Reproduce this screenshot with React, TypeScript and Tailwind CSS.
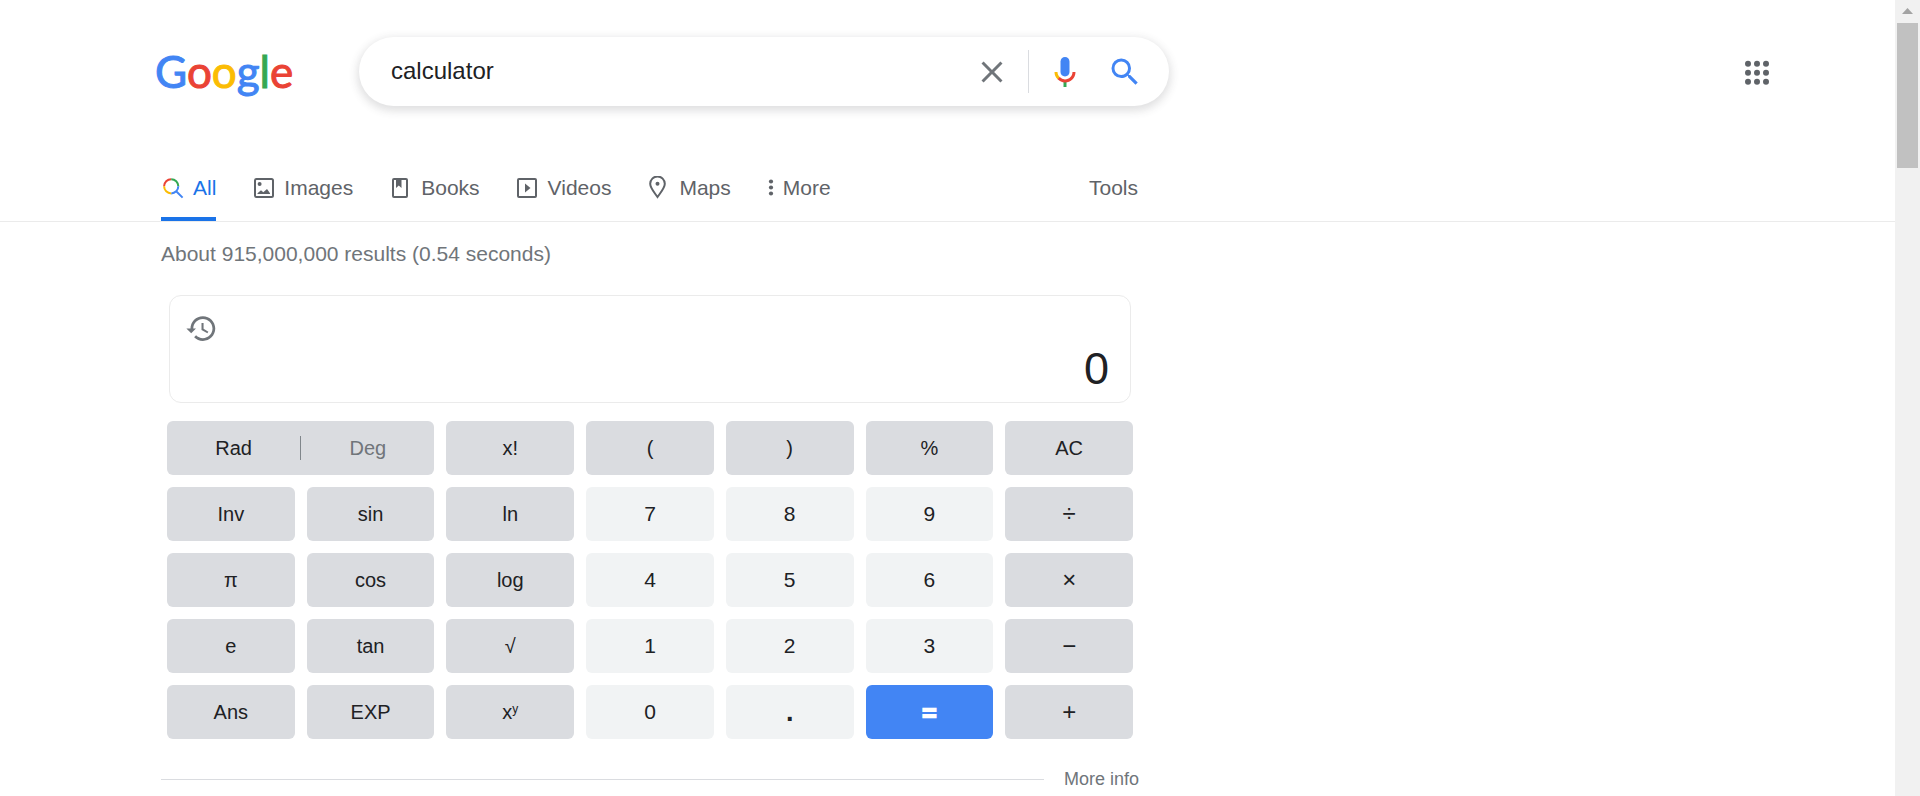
import React from 'react';

interface Key {
  label: React.ReactNode;
  kind: 'function' | 'digit' | 'operator' | 'point' | 'equals';
}

const keyStyles = {
  function: 'bg-[#dadce0] text-[#202124] text-xl',
  digit: 'bg-[#f1f3f4] text-[#202124] text-[21px]',
  operator: 'bg-[#dadce0] text-[#202124] text-2xl',
  point: 'bg-[#f1f3f4] text-[#202124] text-[27px] font-bold',
  equals: "bg-[#4285f4] text-white text-[27px] font-black font-['Inter',sans-serif]",
};

const keys: Key[] = [
  { label: 'x!', kind: 'function' },
  { label: '(', kind: 'function' },
  { label: ')', kind: 'function' },
  { label: '%', kind: 'function' },
  { label: 'AC', kind: 'function' },
  { label: 'Inv', kind: 'function' },
  { label: 'sin', kind: 'function' },
  { label: 'ln', kind: 'function' },
  { label: '7', kind: 'digit' },
  { label: '8', kind: 'digit' },
  { label: '9', kind: 'digit' },
  { label: '÷', kind: 'operator' },
  { label: 'π', kind: 'function' },
  { label: 'cos', kind: 'function' },
  { label: 'log', kind: 'function' },
  { label: '4', kind: 'digit' },
  { label: '5', kind: 'digit' },
  { label: '6', kind: 'digit' },
  { label: '×', kind: 'operator' },
  { label: 'e', kind: 'function' },
  { label: 'tan', kind: 'function' },
  { label: '√', kind: 'function' },
  { label: '1', kind: 'digit' },
  { label: '2', kind: 'digit' },
  { label: '3', kind: 'digit' },
  { label: '−', kind: 'operator' },
  { label: 'Ans', kind: 'function' },
  { label: 'EXP', kind: 'function' },
  { label: <span>x<sup className="text-xs">y</sup></span>, kind: 'function' },
  { label: '0', kind: 'digit' },
  { label: '.', kind: 'point' },
  { label: '=', kind: 'equals' },
  { label: '+', kind: 'operator' },
];

const AllIcon = () => (
  <svg className="w-6 h-6" viewBox="0 0 24 24" fill="none" strokeWidth="2">
    <path d="M3.1 10.3A7.1 7.1 0 0 1 10.2 3.2" stroke="#ea4335" />
    <path d="M10.2 3.2A7.1 7.1 0 0 1 17.3 10.3" stroke="#34a853" />
    <path d="M17.3 10.3A7.1 7.1 0 0 1 10.2 17.4M15.2 15.3L21.6 21.6" stroke="#4285f4" />
    <path d="M10.2 17.4A7.1 7.1 0 0 1 3.1 10.3" stroke="#fbbc04" />
  </svg>
);

const ImagesIcon = () => (
  <svg className="w-6 h-6" viewBox="0 0 24 24" fill="currentColor">
    <rect x="3" y="3" width="18" height="18" rx="1.5" fill="none" stroke="currentColor" strokeWidth="2" />
    <circle cx="7.6" cy="8" r="2" />
    <path d="M5.5 18v-.8L9 14.2l2.3 2L15 13l3 4.2v.8z" />
  </svg>
);

const BooksIcon = () => (
  <svg className="w-6 h-6" viewBox="0 0 24 24" fill="currentColor">
    <rect x="4" y="3" width="14" height="18" rx="1" fill="none" stroke="currentColor" strokeWidth="2" />
    <path d="M7 3h5.5v9l-2.75-2.4L7 12z" />
  </svg>
);

const VideosIcon = () => (
  <svg className="w-6 h-6" viewBox="0 0 24 24" fill="currentColor">
    <rect x="2" y="3" width="18" height="18" rx="1" fill="none" stroke="currentColor" strokeWidth="2" />
    <path d="M9 7.5v9l5.5-4.5z" />
  </svg>
);

const MapsIcon = () => (
  <svg className="w-6 h-6" viewBox="0 0 24 24" fill="currentColor">
    <path
      d="M10.5 21C7 16 3.2 12 3.2 7.8a7.3 7.3 0 0 1 14.6 0C17.8 12 14 16 10.5 21z"
      fill="none"
      stroke="currentColor"
      strokeWidth="2"
    />
    <circle cx="10.5" cy="7.8" r="2" />
  </svg>
);

const MoreIcon = () => (
  <svg className="w-3 h-6" viewBox="0 0 12 24" fill="currentColor">
    <circle cx="4" cy="5.5" r="2.1" />
    <circle cx="4" cy="11.5" r="2.1" />
    <circle cx="4" cy="17.5" r="2.1" />
  </svg>
);

const tabs = [
  { label: 'Images', icon: ImagesIcon },
  { label: 'Books', icon: BooksIcon },
  { label: 'Videos', icon: VideosIcon },
  { label: 'Maps', icon: MapsIcon },
];

const Header = () => (
  <header className="flex items-center pt-[37px] pl-[155px] pr-[120px]">
    <a
      href="#"
      aria-label="Google"
      className="w-[204px] shrink-0 font-['Lato',sans-serif] text-[44px] leading-[69px] [-webkit-text-stroke-width:1px]"
    >
      <span className="text-[#4285f4]">G</span>
      <span className="text-[#ea4335]">o</span>
      <span className="text-[#fbbc04]">o</span>
      <span className="text-[#4285f4]">g</span>
      <span className="text-[#34a853]">l</span>
      <span className="text-[#ea4335]">e</span>
    </a>
    <form className="flex items-center flex-1 max-w-[810px] h-[69px] rounded-full bg-white pl-8 pr-[26px] shadow-[0_3px_8px_2px_rgba(64,60,67,0.16)]">
      <input
        type="text"
        aria-label="Search"
        defaultValue="calculator"
        className="flex-1 min-w-0 pb-[2px] text-2xl text-[#202124] outline-none"
      />
      <button type="button" aria-label="Clear">
        <svg className="w-9 h-9" viewBox="0 0 24 24" fill="#70757a">
          <path d="M19 6.41L17.59 5 12 10.59 6.41 5 5 6.41 10.59 12 5 17.59 6.41 19 12 13.41 17.59 19 19 17.59 13.41 12z" />
        </svg>
      </button>
      <span className="w-px h-[43px] mx-[18px] bg-[#dadce0]" />
      <button type="button" aria-label="Search by voice">
        <svg className="w-9 h-9" viewBox="0 0 24 24">
          <path fill="#4285f4" d="m12 15c1.66 0 3-1.31 3-2.97v-7.02c0-1.66-1.34-3.01-3-3.01s-3 1.34-3 3.01v7.02c0 1.66 1.34 2.97 3 2.97z" />
          <path fill="#34a853" d="m11 18.08h2v3.92h-2z" />
          <path fill="#fbbc05" d="m7.05 16.87c-1.27-1.33-2.05-2.83-2.05-4.87h2c0 1.45 0.56 2.42 1.47 3.38v0.32l-1.15 1.18z" />
          <path fill="#ea4335" d="m12 16.93a4.97 5.25 0 0 1 -3.54 -1.55l-1.41 1.49c1.26 1.34 3.02 2.13 4.95 2.13 3.87 0 6.99-2.92 6.99-7h-1.99c0 2.92-2.24 4.93-5 4.93z" />
        </svg>
      </button>
      <button type="submit" aria-label="Search" className="ml-6">
        <svg className="w-9 h-9" viewBox="0 0 24 24" fill="#4285f4">
          <path d="M15.5 14h-.79l-.28-.27A6.471 6.471 0 0 0 16 9.5 6.5 6.5 0 1 0 9.5 16c1.61 0 3.09-.59 4.23-1.57l.27.28v.79l5 4.99L20.49 19l-4.99-5zm-6 0C7.01 14 5 11.99 5 9.5S7.01 5 9.5 5 14 7.01 14 9.5 11.99 14 9.5 14z" />
        </svg>
      </button>
    </form>
    <button type="button" aria-label="Google apps" className="ml-auto">
      <svg className="w-9 h-9" viewBox="0 0 24 24" fill="#5f6368">
        {[6.5, 12.5, 18.5].map(y => [6, 12, 18].map(x => <circle key={`${x}-${y}`} cx={x} cy={y} r="2" />))}
      </svg>
    </button>
  </header>
);

const Tabs = () => (
  <nav className="mt-[49px] border-b border-[#ebebeb] pl-[161px] text-[21px] text-[#5f6368]">
    <div className="flex max-w-[977px] h-[66px] gap-9">
      <a href="#" className="flex items-center gap-2 border-y-4 border-t-transparent border-b-[#1a73e8] text-[#1a73e8]">
        <AllIcon />
        All
      </a>
      {tabs.map(({ label, icon: Icon }) => (
        <a key={label} href="#" className="flex items-center gap-2">
          <Icon />
          {label}
        </a>
      ))}
      <button type="button" className="flex items-center gap-1">
        <MoreIcon />
        More
      </button>
      <button type="button" className="ml-auto">Tools</button>
    </div>
  </nav>
);

const Calculator = () => (
  <section aria-label="Calculator" className="px-[6px] mt-[25px]">
    <div className="mx-[2px] h-[108px] flex items-start justify-between rounded-xl border border-[#ebebeb] pl-[15px] pr-[21px]">
      <button type="button" aria-label="History" className="mt-4">
        <svg className="w-[33px] h-[33px]" viewBox="0 0 24 24" fill="#70757a">
          <path d="M13 3c-4.97 0-9 4.03-9 9H1l3.5 3.5L8 12H6c0-3.87 3.13-7 7-7s7 3.13 7 7-3.13 7-7 7c-1.93 0-3.68-.79-4.94-2.06l-1.42 1.42C8.27 19.99 10.51 21 13 21c4.97 0 9-4.03 9-9s-4.03-9-9-9zm-1 5v5l4.28 2.54.72-1.21-3.5-2.08V8H12z" />
        </svg>
      </button>
      <output className="self-end pb-[5px] text-[45px] leading-14 text-[#202124]">0</output>
    </div>
    <div className="grid grid-cols-7 gap-3 mt-[18px]">
      <div className="col-span-2 h-[54px] flex items-center rounded-md bg-[#dadce0] text-xl">
        <button type="button" className="flex-1 text-[#202124]">Rad</button>
        <span className="w-px h-6 bg-[#80868b]" />
        <button type="button" className="flex-1 text-[#70757a]">Deg</button>
      </div>
      {keys.map((key, i) => (
        <button
          key={i}
          type="button"
          className={`h-[54px] flex items-center justify-center rounded-md ${keyStyles[key.kind]}`}
        >
          {key.label}
        </button>
      ))}
    </div>
  </section>
);

const ScrollBar = () => (
  <div aria-hidden="true" className="w-[25px] shrink-0 bg-[#f1f1f1] px-[2px]">
    <div className="flex justify-center h-[23px] pt-2">
      <svg className="w-[11px] h-[6px]" viewBox="0 0 11 6" fill="#a3a3a3">
        <path d="M0 6L5.5 0 11 6z" />
      </svg>
    </div>
    <div className="h-[145px] bg-[#c1c1c1]" />
  </div>
);

const App: React.FC = () => {
  return (
    <div className="flex min-h-screen bg-white font-['Liberation_Sans',Arial,sans-serif]">
      <div className="flex-1 min-w-0">
        <Header />
        <Tabs />
        <main className="pl-[161px] pt-4">
          <div className="max-w-[978px]">
            <p className="text-[21px] leading-8 text-[#70757a]">About 915,000,000 results (0.54 seconds)</p>
            <Calculator />
            <div className="flex items-center gap-5 mt-7">
              <span className="flex-1 h-px bg-[#dadce0]" />
              <a href="#" className="text-lg leading-6 text-[#70757a]">More info</a>
            </div>
          </div>
        </main>
      </div>
      <ScrollBar />
    </div>
  );
};

export default App;
